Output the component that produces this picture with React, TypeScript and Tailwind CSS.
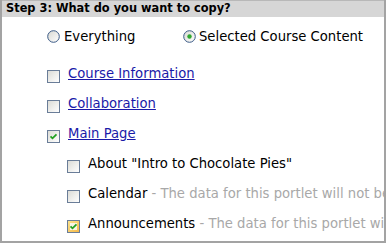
import React from "react";

function Radio({ checked }: { checked?: boolean }) {
  return (
    <svg width="13" height="13" viewBox="0 0 13 13" className="shrink-0">
      <defs>
        <linearGradient id={checked ? "rg1" : "rg0"} x1="0" y1="0" x2="1" y2="1">
          <stop offset="0" stopColor="#d8d8d2" />
          <stop offset="1" stopColor="#ffffff" />
        </linearGradient>
      </defs>
      <circle cx="6.5" cy="6.5" r="5.8" fill={`url(#${checked ? "rg1" : "rg0"})`} stroke="#3b5a86" strokeWidth="1" />
      {checked && <circle cx="6.5" cy="6.5" r="2.2" fill="#2fa82f" />}
    </svg>
  );
}

function Check({ checked, hover }: { checked?: boolean; hover?: boolean }) {
  const id = hover ? "cgh" : checked ? "cgc" : "cgn";
  return (
    <svg width="13" height="13" viewBox="0 0 13 13" className="shrink-0 mt-[4px]">
      <defs>
        <linearGradient id={id} x1="0" y1="0" x2="1" y2="1">
          {hover ? (
            <>
              <stop offset="0" stopColor="#fbe38e" />
              <stop offset="1" stopColor="#f5b94a" />
            </>
          ) : (
            <>
              <stop offset="0" stopColor="#dcdcd6" />
              <stop offset="1" stopColor="#ffffff" />
            </>
          )}
        </linearGradient>
      </defs>
      <rect x="0.5" y="0.5" width="12" height="12" fill="#ffffff" stroke="#6a7d98" />
      <rect x="1" y="1" width="11" height="11" fill={`url(#${id})`} />
      {hover && <rect x="3" y="3" width="7" height="7" fill="#f8f4e6" />}
      {checked && (
        <path d="M3.5 6.3 L5.5 8.3 L9.5 4.3" fill="none" stroke="#21a121" strokeWidth="1.8" />
      )}
    </svg>
  );
}

const font = { fontFamily: '"DejaVu Sans", Verdana, sans-serif' };

export default function App() {
  return (
    <div
      className="w-[386px] h-[243px] bg-white border-l-2 border-r-2 border-b-2 border-[#a3a3a3] overflow-hidden box-border"
      style={font}
    >
      <div className="h-[17px] bg-[#d6d6d6] border-t border-[#b8b8b8] pl-[4px] flex items-center text-[11.4px] font-bold text-black leading-none whitespace-nowrap">
        Step 3: What do you want to copy?
      </div>
      <div className="mt-[5px] h-[30px] flex items-center pl-[45px] text-[13.2px] text-black whitespace-nowrap">
        <div className="w-[136px] flex items-center gap-[4px]">
          <Radio />
          <span>Everything</span>
        </div>
        <div className="flex items-center gap-[3px]">
          <Radio checked />
          <span>Selected Course Content</span>
        </div>
      </div>
      <div className="mt-[7px] flex flex-col text-[13.2px] whitespace-nowrap">
        <div className="h-[30px] flex items-center pl-[45px] gap-[8px]">
          <Check />
          <a href="#" className="text-[#1a1aa8] underline">Course Information</a>
        </div>
        <div className="h-[30px] flex items-center pl-[45px] gap-[8px]">
          <Check />
          <a href="#" className="text-[#1a1aa8] underline">Collaboration</a>
        </div>
        <div className="h-[30px] flex items-center pl-[45px] gap-[8px]">
          <Check checked />
          <a href="#" className="text-[#1a1aa8] underline">Main Page</a>
        </div>
        <div className="h-[30px] flex items-center pl-[65px] gap-[8px]">
          <Check />
          <span className="text-black">About "Intro to Chocolate Pies"</span>
        </div>
        <div className="h-[30px] flex items-center pl-[65px] gap-[8px]">
          <Check />
          <span className="text-black">
            Calendar<span className="text-[#a8a8a8]"> - The data for this portlet will not be copied</span>
          </span>
        </div>
        <div className="h-[30px] flex items-center pl-[65px] gap-[8px]">
          <Check checked hover />
          <span className="text-black">
            Announcements<span className="text-[#a8a8a8]"> - The data for this portlet will not be copied</span>
          </span>
        </div>
      </div>
    </div>
  );
}
